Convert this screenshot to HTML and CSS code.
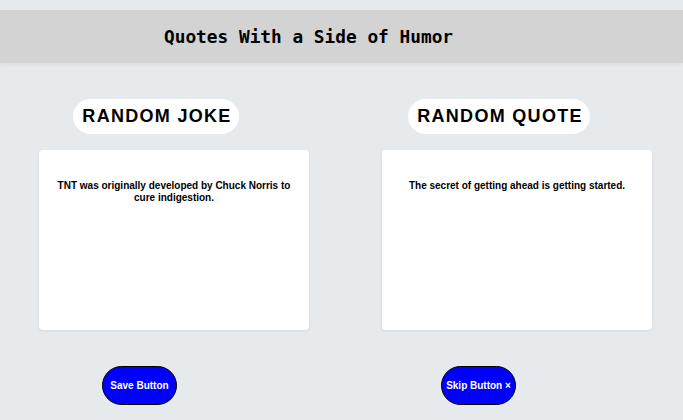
FILE: index.html
```html
<!DOCTYPE html>
<html>
<head>
<meta charset="utf-8">
<link rel="stylesheet" href="styles.css">
</head>
<body>
<header class="topbar">
  <h1 class="site-title">Quotes With a Side of Humor</h1>
</header>
<main class="columns">
  <section class="col">
    <h2 class="pill pill-joke">RANDOM JOKE</h2>
    <div class="card"><p>TNT was originally developed by Chuck Norris to cure indigestion.</p></div>
    <button class="btn btn-save">Save Button</button>
  </section>
  <section class="col">
    <h2 class="pill pill-quote">RANDOM QUOTE</h2>
    <div class="card"><p>The secret of getting ahead is getting started.</p></div>
    <button class="btn btn-skip">Skip Button ×</button>
  </section>
</main>
</body>
</html>
```
FILE: styles.css
```css
html, body {
  margin: 0;
  padding: 0;
}
body {
  background: #e7eaed;
  font-family: "Liberation Sans", Arial, sans-serif;
  color: #000;
  width: 683px;
  height: 420px;
  overflow: hidden;
}
.topbar {
  margin-top: 10px;
  height: 53px;
  background: #d3d3d3;
  display: flex;
  align-items: center;
  padding-left: 164px;
  box-shadow: 0 2px 4px rgba(0,0,0,0.06);
}
.site-title {
  margin: 0;
  font-family: "DejaVu Sans Mono", "Liberation Mono", monospace;
  font-size: 17.8px;
  font-weight: bold;
  letter-spacing: 0;
}
.columns {
  display: grid;
  grid-template-columns: 270px 270px;
  column-gap: 73px;
  padding: 0 31px 0 39px;
  margin-top: 36px;
}
.col {
  display: flex;
  flex-direction: column;
  align-items: center;
}
.pill {
  margin: 0 36px 0 0;
  height: 35px;
  box-sizing: border-box;
  padding: 0 7px 0 9px;
  display: flex;
  align-items: center;
  background: #fff;
  border-radius: 18px;
  font-size: 18px;
  font-weight: bold;
  letter-spacing: 1.3px;
}
.card {
  margin-top: 16px;
  width: 270px;
  height: 180px;
  background: #fff;
  border-radius: 4px;
  box-shadow: 0 1px 3px rgba(0,0,0,0.08);
  box-sizing: border-box;
  padding: 30px 15px 0;
}
.card p {
  margin: 0;
  text-align: center;
  font-size: 10px;
  font-weight: bold;
  line-height: 11.5px;
}
.btn {
  margin-top: 36px;
  width: 75px;
  height: 39px;
  border: 1px solid #000;
  border-radius: 20px;
  background: #0000ff;
  color: #fff;
  font-family: "Liberation Sans", Arial, sans-serif;
  font-size: 10px;
  font-weight: bold;
  padding: 0;
}
.btn-save { margin-right: 69px; }
.btn-skip { margin-right: 77px; }
```
